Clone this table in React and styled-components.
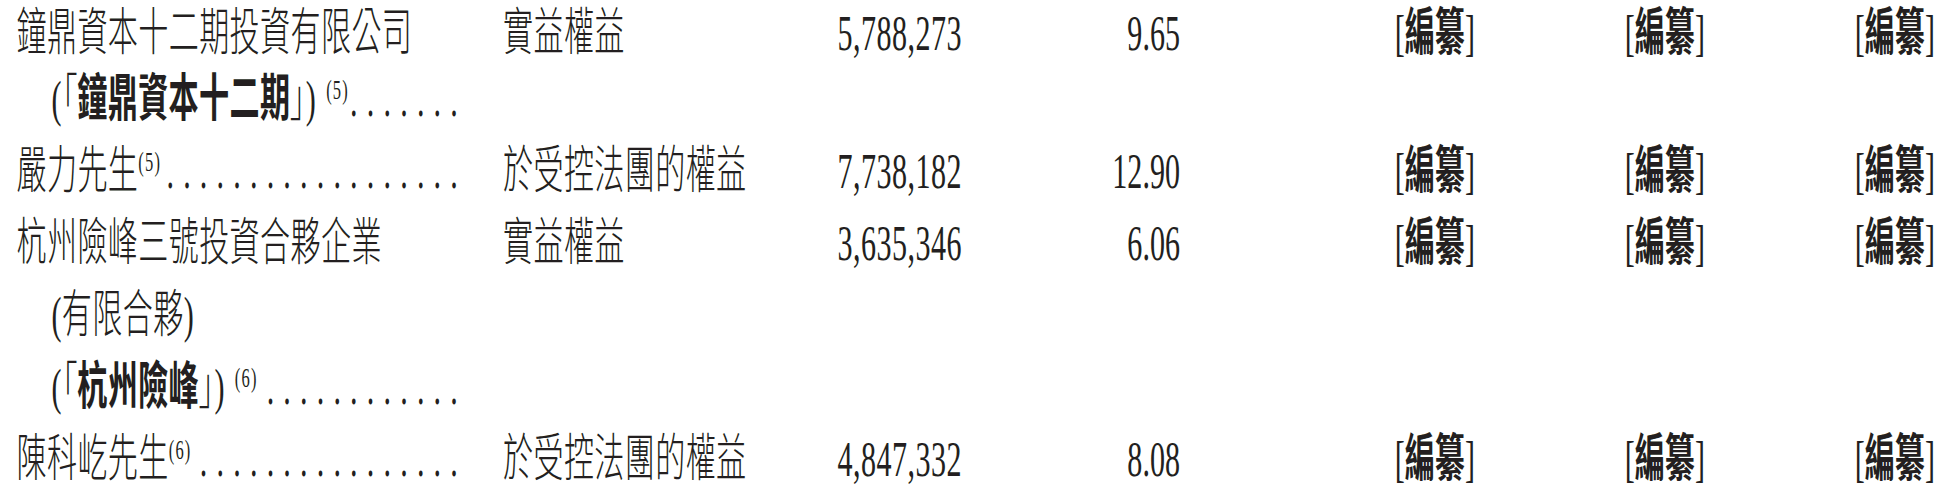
import React from "react";
import styled, { createGlobalStyle } from "styled-components";

const S = 0.59;
const u = (px) => `${(px / S).toFixed(2)}px`;

const GlobalStyle = createGlobalStyle`
  html, body { margin: 0; padding: 0; background: #ffffff; overflow: hidden; }
  body { width: 1958px; height: 498px; }
`;

const Page = styled.div`
  box-sizing: border-box;
  width: ${u(1958)};
  transform: scaleX(${S});
  transform-origin: 0 0;
  padding-left: ${u(16.5)};
  font-family: "Liberation Serif", "Noto Sans CJK TC", "Noto Sans CJK SC", serif;
  font-size: 51px;
  font-weight: 300;
  letter-spacing: 0.6px;
  color: #231f20;
`;

const COLS = [486.5, 300, 159, 218, 295, 230, 230].map(u).join(" ");

const Entry = styled.div`
  display: grid;
  grid-template-columns: ${COLS};
  align-items: start;
  line-height: ${(p) => p.$lh ?? 72}px;
  padding-bottom: ${(p) => p.$pb ?? 0}px;
`;

const NameCell = styled.div`
  min-width: 0;
  padding-right: ${u(36)};
`;

const NameLine = styled.div`
  display: flex;
  align-items: flex-start;
  white-space: nowrap;
  padding-left: ${(p) => (p.$indent ? u(35) : "0px")};
`;

const Label = styled.span`
  flex-shrink: 0;
`;

const Strong = styled.span`
  font-weight: 700;
`;

const Corner = styled.span`
  font-feature-settings: "palt";
`;

const Note = styled.span`
  font-size: 28px;
  line-height: 1;
  vertical-align: 17px;
  letter-spacing: 2px;
  margin-left: ${(p) => (p.$gap ? u(p.$gap) : "0px")};
`;

const Leader = styled.span`
  flex: 1 1 0;
  min-width: 0;
  display: flex;
  justify-content: flex-end;
  overflow: hidden;
  margin-left: ${u(2)};
  letter-spacing: 0;
`;

const Dots = styled.span`
  flex-shrink: 0;
  font-weight: 400;
  letter-spacing: 15.55px;
`;

const Interest = styled.div`
  white-space: nowrap;
`;

const Num = styled.div`
  text-align: right;
  white-space: nowrap;
  font-weight: 400;
  letter-spacing: ${(p) => (p.$wide ? "0.8px" : "0px")};
`;

const Redacted = styled.div`
  text-align: right;
  white-space: nowrap;
  letter-spacing: 0;
`;

const RedactedWord = styled.span`
  font-weight: 700;
`;

const DOTS = ".".repeat(60);

function Lead() {
  return (
    <Leader>
      <Dots>{DOTS}</Dots>
    </Leader>
  );
}

function Tail() {
  return (
    <>
      {[0, 1, 2].map((i) => (
        <Redacted key={i}>
          [<RedactedWord>編纂</RedactedWord>]
        </Redacted>
      ))}
    </>
  );
}

function Quoted({ children }) {
  return (
    <>
      (<Corner>「</Corner>
      <Strong>{children}</Strong>
      <Corner>」</Corner>)
    </>
  );
}

const rows = [
  {
    key: "zd",
    lh: 66,
    pb: 3,
    lines: [
      { content: "鐘鼎資本十二期投資有限公司" },
      {
        indent: true,
        lead: true,
        content: (
          <>
            <Quoted>鐘鼎資本十二期</Quoted>
            <Note $gap={10}>(5)</Note>
          </>
        ),
      },
    ],
    interest: "實益權益",
    shares: "5,788,273",
    pct: "9.65",
  },
  {
    key: "yl",
    lines: [
      {
        lead: true,
        content: (
          <>
            嚴力先生<Note>(5)</Note>
          </>
        ),
      },
    ],
    interest: "於受控法團的權益",
    shares: "7,738,182",
    pct: "12.90",
  },
  {
    key: "hz",
    lines: [
      { content: "杭州險峰三號投資合夥企業" },
      { indent: true, content: "(有限合夥)" },
      {
        indent: true,
        lead: true,
        content: (
          <>
            <Quoted>杭州險峰</Quoted>
            <Note $gap={10}>(6)</Note>
          </>
        ),
      },
    ],
    interest: "實益權益",
    shares: "3,635,346",
    pct: "6.06",
  },
  {
    key: "ck",
    lines: [
      {
        lead: true,
        content: (
          <>
            陳科屹先生<Note>(6)</Note>
          </>
        ),
      },
    ],
    interest: "於受控法團的權益",
    shares: "4,847,332",
    pct: "8.08",
  },
];

export default function App() {
  return (
    <>
      <GlobalStyle />
      <Page>
        {rows.map((r) => (
          <Entry key={r.key} $lh={r.lh} $pb={r.pb}>
            <NameCell>
              {r.lines.map((l, i) => (
                <NameLine key={i} $indent={l.indent}>
                  <Label>{l.content}</Label>
                  {l.lead && <Lead />}
                </NameLine>
              ))}
            </NameCell>
            <Interest>{r.interest}</Interest>
            <Num $wide>{r.shares}</Num>
            <Num>{r.pct}</Num>
            <Tail />
          </Entry>
        ))}
      </Page>
    </>
  );
}
